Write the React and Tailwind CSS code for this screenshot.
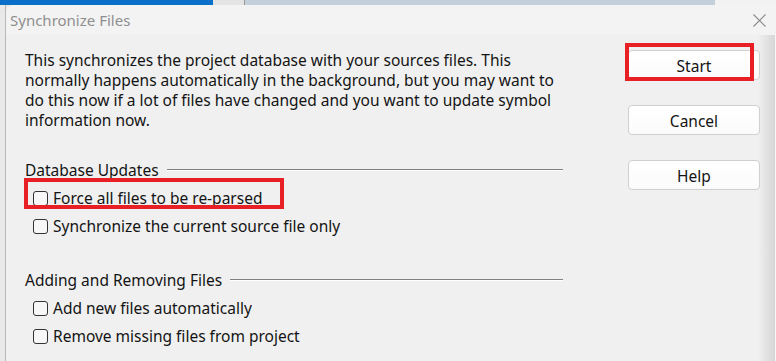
import React from "react";

const font = { fontFamily: '"Noto Sans", "Open Sans", "Liberation Sans", sans-serif' };

function Check({ label }) {
  return (
    <div className="flex items-center h-[28px] pl-[8px]">
      <div className="w-[15px] h-[15px] rounded-[3px] border border-[#333333] bg-[#f7f7f7] shrink-0" />
      <span className="ml-[5px] text-[15.5px] text-[#141414] leading-[20px]">{label}</span>
    </div>
  );
}

function Heading({ label }) {
  return (
    <div className="flex items-center h-[20px]">
      <span className="text-[15.5px] text-[#141414] leading-[20px]">{label}</span>
      <div className="flex-1 ml-[8px] h-[2px] border-t border-[#808080] border-b-white border-b mt-[-1px]" />
    </div>
  );
}

function Btn({ label }) {
  return (
    <div className="w-[132px] h-[30px] rounded-[4px] border border-[#d0d0d0] bg-gradient-to-b from-[#ffffff] to-[#fbfbfb] flex items-center justify-center pt-[1px] text-[15.5px] leading-[20px] text-[#141414]">
      {label}
    </div>
  );
}

export default function App() {
  return (
    <div className="w-[776px] h-[361px] overflow-hidden flex flex-col bg-[#e6e6e6]" style={font}>
      {/* background app strip */}
      <div className="h-[5px] flex shrink-0 overflow-hidden">
        <div className="w-[213px] bg-[#0a6fc9]" />
        <div className="w-[32px] bg-[#e4e4e4] border-r border-[#999]" />
        <div className="w-[470px] bg-[#c3cfdb]" />
        <div className="flex-1 bg-[#f2f2f2]" />
      </div>
      <div className="flex flex-1">
        <div className="w-[6px] bg-[#e9e9e9] border-r border-[#b8b8b8] shrink-0" />
        <div className="flex-1 flex flex-col bg-[#f0f0f0] rounded-tl-[8px] overflow-hidden relative">
          {/* title bar */}
          <div className="h-[30px] bg-[#f3f3f3] flex items-center justify-between pl-[4px] pr-[10px] shrink-0">
            <span className="text-[15px] text-[#8f8f8f] leading-[20px]">Synchronize Files</span>
            <svg width="13" height="13" viewBox="0 0 13 13">
              <path d="M0.5 0.5 L12.5 12.5 M12.5 0.5 L0.5 12.5" stroke="#8a8a8a" strokeWidth="1.1" fill="none" />
            </svg>
          </div>
          {/* body */}
          <div className="flex flex-1 pl-[19px] pt-[15px]">
            <div className="w-[538px] flex flex-col">
              <p className="text-[15.5px] leading-[20px] text-[#141414] w-[530px]">
                This synchronizes the project database with your sources files. This normally happens automatically in the background, but you may want to do this now if a lot of files have changed and you want to update symbol information now.
              </p>
              <div className="mt-[30px]">
                <Heading label="Database Updates" />
                <div className="pt-[4px]">
                  <Check label="Force all files to be re-parsed" />
                  <Check label="Synchronize the current source file only" />
                </div>
              </div>
              <div className="mt-[30px]">
                <Heading label="Adding and Removing Files" />
                <div className="pt-[4px]">
                  <Check label="Add new files automatically" />
                  <Check label="Remove missing files from project" />
                </div>
              </div>
            </div>
            <div className="ml-[65px] flex flex-col gap-[25px]">
              <Btn label="Start" />
              <Btn label="Cancel" />
              <Btn label="Help" />
            </div>
          </div>
          {/* right shading */}
          <div className="absolute top-[30px] right-0 bottom-0 w-[18px] bg-gradient-to-r from-[#f0f0f0]/0 to-[#d6d6d6] border-r border-[#f8f8f8]" />
          {/* red annotation boxes */}
          <div className="absolute left-[18px] top-[173px] w-[260px] h-[31px] border-[4px] border-[#e81f25]" />
          <div className="absolute left-[619px] top-[38px] w-[129px] h-[38px] border-[4px] border-[#e81f25]" />
        </div>
      </div>
    </div>
  );
}
